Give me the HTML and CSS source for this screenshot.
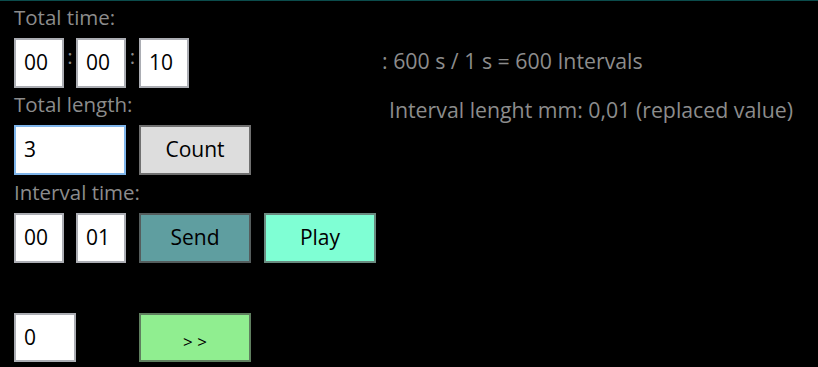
FILE: index.html
```html
<!DOCTYPE html>
<html lang="en">
<head>
<meta charset="utf-8">
<title>Interval timer</title>
<link rel="stylesheet" href="styles.css">
</head>
<body>
<div class="app">
  <div class="controls">
    <div class="label">Total time:</div>
    <div class="row">
      <div class="field w50">00</div>
      <div class="sep">:</div>
      <div class="field w50">00</div>
      <div class="sep sep-wide">:</div>
      <div class="field w50">10</div>
    </div>
    <div class="label">Total length:</div>
    <div class="row">
      <div class="field w112 focused">3</div>
      <div class="btn btn-default gap13">Count</div>
    </div>
    <div class="label label-tall">Interval time:</div>
    <div class="row">
      <div class="field w50">00</div>
      <div class="field w50 gap12">01</div>
      <div class="btn btn-send gap13">Send</div>
      <div class="btn btn-play gap13">Play</div>
    </div>
    <div class="spacer"></div>
    <div class="row row-last">
      <div class="field w62">0</div>
      <div class="btn btn-next gap63">&gt; &gt;</div>
    </div>
  </div>
  <div class="info">
    <div class="info-line">: 600 s / 1 s = 600 Intervals</div>
    <div class="info-line info-indent">Interval lenght mm: 0,01 (replaced value)</div>
  </div>
</div>
</body>
</html>
```
FILE: styles.css
```css
html, body {
  margin: 0;
  padding: 0;
}
body {
  background: #000;
  border-top: 1px solid #0b4c4c;
  height: 366px;
  overflow: hidden;
  font-family: "Open Sans", "Noto Sans", sans-serif;
  font-size: 20.5px;
  color: #8c8c8c;
}
.app {
  display: flex;
  align-items: flex-start;
}
.controls {
  display: flex;
  flex-direction: column;
  padding-left: 14px;
  width: 362px;
}
.label {
  height: 37px;
  box-sizing: border-box;
  line-height: 28px;
  padding-top: 2px;
  white-space: nowrap;
}
.label-tall {
  height: 38px;
  padding-top: 3px;
}
.row {
  display: flex;
  height: 50px;
}
.row-last {
  height: 49px;
}
.spacer {
  height: 50px;
}
.field {
  box-sizing: border-box;
  height: 100%;
  background: #fff;
  border: 2px solid #abadb3;
  color: #000;
  font-size: 21px;
  display: flex;
  align-items: center;
  padding-left: 8px;
  padding-bottom: 2px;
}
.focused {
  border-color: #7eb4ea;
  align-items: flex-start;
  padding-top: 8px;
}
.w50 { width: 50px; }
.w62 { width: 62px; }
.w112 { width: 112px; }
.gap12 { margin-left: 12px; }
.gap13 { margin-left: 13px; }
.gap63 { margin-left: 63px; }
.sep {
  width: 12px;
  text-align: center;
  line-height: 28px;
  padding-top: 4px;
  color: #8c8c8c;
}
.sep-wide {
  width: 13px;
}
.btn {
  box-sizing: border-box;
  width: 112px;
  height: 100%;
  border: 2px solid #707070;
  color: #000;
  font-size: 21px;
  display: flex;
  align-items: center;
  justify-content: center;
  padding-bottom: 2px;
}
.btn-default { background: #dddddd; }
.btn-send { background: #5f9ea0; border-color: #555d5d; }
.btn-play { background: #7fffd4; border-color: #6a8a80; }
.btn-next {
  background: #90ee90;
  border-color: #5f7f5f;
  font-size: 17px;
  padding-top: 10px;
}
.info {
  display: flex;
  flex-direction: column;
  padding-top: 46px;
  margin-left: 6px;
}
.info-line {
  font-size: 21.3px;
  line-height: 28px;
  height: 49px;
  white-space: nowrap;
}
.info-indent {
  padding-left: 7px;
}
```
